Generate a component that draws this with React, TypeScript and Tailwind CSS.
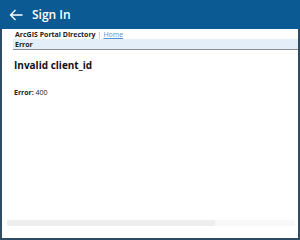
import React from "react";

export default function App() {
  return (
    <div className="w-[300px] h-[240px] bg-[#2f4c63] p-[2px] pt-0 box-border" style={{ fontFamily: '"Open Sans", sans-serif' }}>
      <div className="flex flex-col h-full bg-white">
        <div className="h-[29px] -mx-[2px] bg-[#0b5a94] flex items-center pl-[9px] gap-[9px] shrink-0">
          <svg width="14" height="12" viewBox="0 0 14 12" fill="none" stroke="white" strokeWidth="1.3">
            <path d="M13.5 6H1.5M6.5 1L1.5 6L6.5 11" />
          </svg>
          <span className="text-white text-[12px] font-semibold leading-none">Sign In</span>
        </div>
        <div className="flex-1 flex flex-col pl-[11px]">
          <div className="h-[10px] flex items-center pl-[2px] text-[7px] leading-none text-[#222]">
            <span className="font-bold">ArcGIS Portal Directory</span>
            <span className="text-[#999] mx-[2px]">|</span>
            <span className="text-[#5b8fc8] underline">Home</span>
          </div>
          <div className="h-[11px] bg-[#e4eef8] border-b-[1.5px] border-[#8a9096] flex items-center pl-[2px] text-[7px] font-bold leading-none text-[#222]">
            Error
          </div>
          <div className="mt-[10px] text-[10px] font-bold leading-none text-[#111] pl-[1px]">Invalid client_id</div>
          <div className="mt-[19px] text-[7px] leading-none text-[#222] pl-[1px]">
            <span className="font-bold">Error:</span> 400
          </div>
        </div>
        <div className="h-[6px] mb-[12px] ml-[5px] mr-[3px] bg-[#f8f8f8] flex">
          <div className="w-[208px] h-full bg-[#eeeeee]" />
        </div>
      </div>
    </div>
  );
}
